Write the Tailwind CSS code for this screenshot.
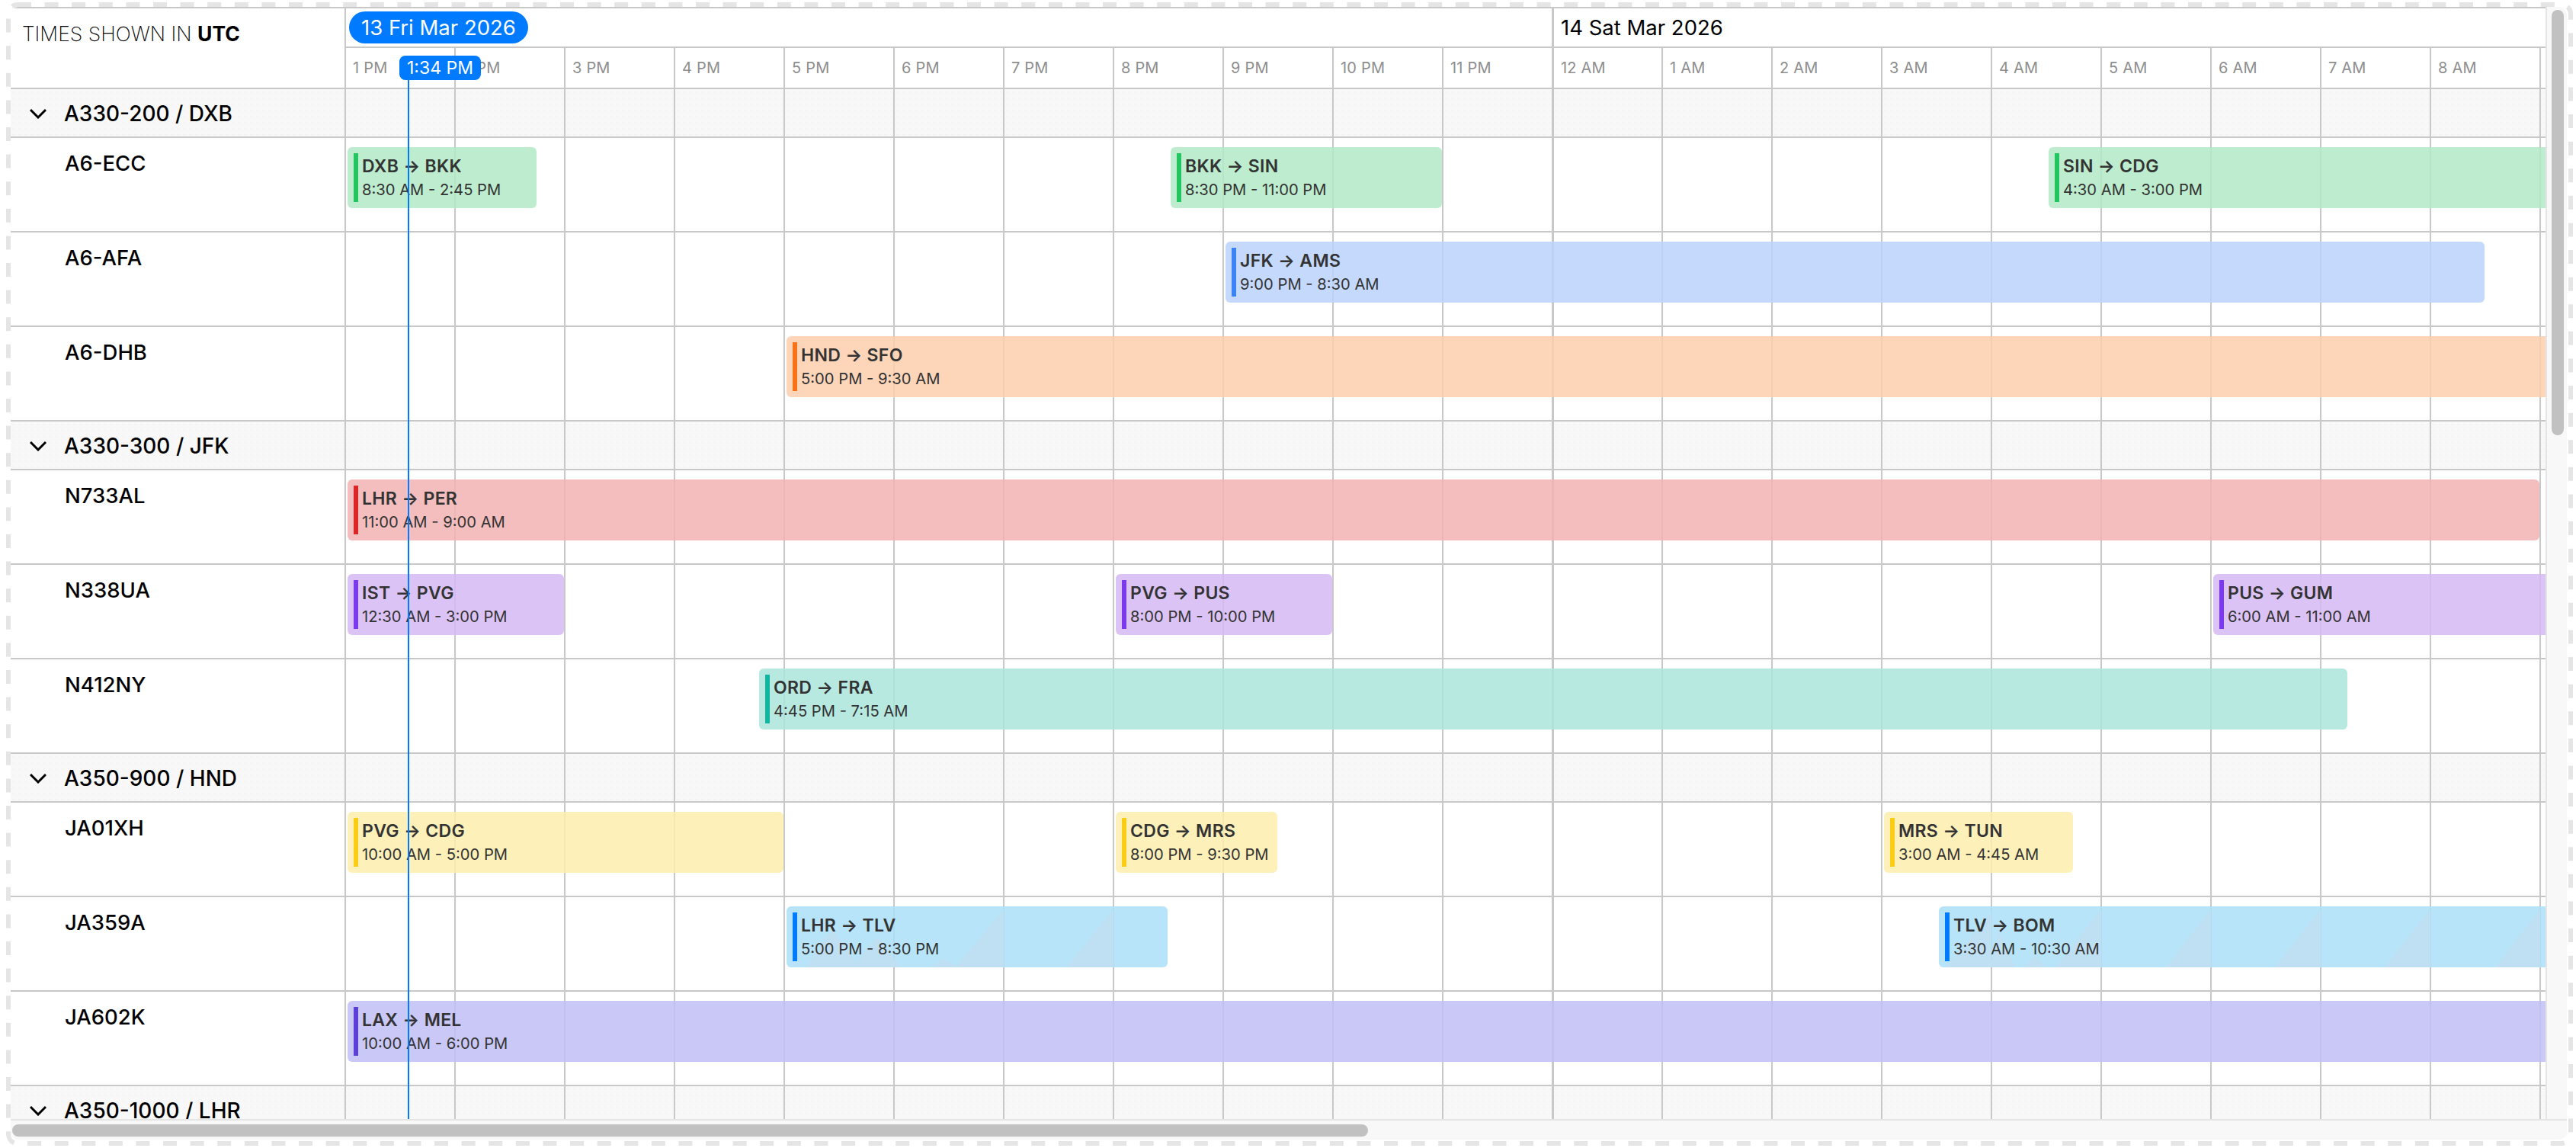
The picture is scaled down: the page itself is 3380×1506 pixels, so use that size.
<!DOCTYPE html>
<html lang="en">
<head>
<meta charset="utf-8">
<title>Fleet timeline</title>
<script src="https://cdn.jsdelivr.net/npm/@tailwindcss/browser@4"></script>
</head>
<body class="bg-white">
<div class="relative w-[3380px] h-[1506px] overflow-hidden bg-white font-['Inter','Liberation_Sans',sans-serif] text-black pt-[9px] pl-[14px]">

  <!-- dashed frame -->
  <svg class="absolute left-0 top-0 w-[3380px] h-[1506px] pointer-events-none" viewBox="0 0 3380 1506" fill="none">
    <rect x="11" y="6" width="3362" height="1494" rx="12" stroke="#e5e5e5" stroke-width="6" stroke-dasharray="18 17.6"/>
  </svg>

  <div class="relative w-[3354px] h-[1486px] flex flex-col rounded-[10px] overflow-hidden bg-[#f8f8f8]">
    <div class="flex h-[1459px]">

      <!-- viewport -->
      <div class="relative w-[3326px] h-[1459px] overflow-hidden bg-white border-t-2 border-[#c8c8c8]">

        <!-- header -->
        <div class="flex h-[106px] border-b-2 border-[#c8c8c8]">
          <div class="w-[440px] shrink-0 border-r-2 border-[#c8c8c8] pl-[15px] pt-[15px] text-[26.5px] leading-[36px] font-extralight">TIMES SHOWN IN <span class="font-bold">UTC</span></div>
          <div class="flex flex-col flex-1 min-w-0">
            <div class="flex h-[52px] border-b-2 border-[#c8c8c8]">
              <div class="w-[1585px] shrink-0 border-r-[3px] border-[#c8c8c8] pl-[4px] pt-[4px]">
                <div class="w-[235px] h-[42px] rounded-full bg-[#007aff] text-white text-[27.5px] leading-[42px] pl-[16px] whitespace-nowrap">13 Fri Mar 2026</div>
              </div>
              <div class="pl-[9px] pt-[4px] text-[27.5px] leading-[42px] whitespace-nowrap">14 Sat Mar 2026</div>
            </div>
            <div class="flex h-[52px] text-[20px] leading-[52px] tracking-[0.2px] text-[#8e8e8e] whitespace-nowrap">
              <div class="w-[144px] shrink-0 border-r-2 border-[#c8c8c8] pl-[9px]">1 PM</div>
              <div class="w-[144px] shrink-0 border-r-2 border-[#c8c8c8] pl-[9px]">2 PM</div>
              <div class="w-[144px] shrink-0 border-r-2 border-[#c8c8c8] pl-[9px]">3 PM</div>
              <div class="w-[144px] shrink-0 border-r-2 border-[#c8c8c8] pl-[9px]">4 PM</div>
              <div class="w-[144px] shrink-0 border-r-2 border-[#c8c8c8] pl-[9px]">5 PM</div>
              <div class="w-[144px] shrink-0 border-r-2 border-[#c8c8c8] pl-[9px]">6 PM</div>
              <div class="w-[144px] shrink-0 border-r-2 border-[#c8c8c8] pl-[9px]">7 PM</div>
              <div class="w-[144px] shrink-0 border-r-2 border-[#c8c8c8] pl-[9px]">8 PM</div>
              <div class="w-[144px] shrink-0 border-r-2 border-[#c8c8c8] pl-[9px]">9 PM</div>
              <div class="w-[144px] shrink-0 border-r-2 border-[#c8c8c8] pl-[9px]">10 PM</div>
              <div class="w-[145px] shrink-0 border-r-[3px] border-[#c8c8c8] pl-[9px]">11 PM</div>
              <div class="w-[143px] shrink-0 border-r-2 border-[#c8c8c8] pl-[9px]">12 AM</div>
              <div class="w-[144px] shrink-0 border-r-2 border-[#c8c8c8] pl-[9px]">1 AM</div>
              <div class="w-[144px] shrink-0 border-r-2 border-[#c8c8c8] pl-[9px]">2 AM</div>
              <div class="w-[144px] shrink-0 border-r-2 border-[#c8c8c8] pl-[9px]">3 AM</div>
              <div class="w-[144px] shrink-0 border-r-2 border-[#c8c8c8] pl-[9px]">4 AM</div>
              <div class="w-[144px] shrink-0 border-r-2 border-[#c8c8c8] pl-[9px]">5 AM</div>
              <div class="w-[144px] shrink-0 border-r-2 border-[#c8c8c8] pl-[9px]">6 AM</div>
              <div class="w-[144px] shrink-0 border-r-2 border-[#c8c8c8] pl-[9px]">7 AM</div>
              <div class="w-[144px] shrink-0 border-r-2 border-[#c8c8c8] pl-[9px]">8 AM</div>
            </div>
          </div>
        </div>

        <!-- body -->
        <div class="relative">

          <!-- group A330-200 -->
          <div class="flex h-[64px] border-b-2 border-[#c8c8c8] bg-[#f8f8f8] bg-[radial-gradient(#f3f3f3_0.8px,transparent_0.8px)] bg-size-[8px_8px]">
            <div class="w-[440px] shrink-0 flex items-center pl-[25px] pt-[2px] gap-[23px] border-r-2 border-[#c8c8c8] text-[28px] font-medium">
              <svg class="w-[22px] h-[13px] shrink-0" viewBox="0 0 22 13" fill="none" stroke="#000" stroke-width="3"><path d="M1 1l10 10L21 1"/></svg>
              <span>A330-200 / DXB</span>
            </div>
          </div>
          <!-- A6-ECC -->
          <div class="flex h-[124px] border-b-2 border-[#c8c8c8]">
            <div class="w-[440px] shrink-0 border-r-2 border-[#c8c8c8] pl-[71px] pt-[17px] text-[27.5px] leading-[32px] font-medium">A6-ECC</div>
            <div class="relative flex-1 min-w-0">
              <div class="absolute z-20 top-[12px] left-[2px] w-[248px] h-[80px] rounded-[6px] bg-[#b2e9c6]/85 flex p-[8px] gap-[5px]"><i class="block w-[6px] h-[64px] bg-[#22c55e]"></i><div class="whitespace-nowrap text-[#333333]"><div class="mt-[4px] text-[23px] leading-[26px] font-semibold tracking-[0.3px]">DXB → BKK</div><div class="mt-[6px] text-[20.2px] leading-[24px]">8:30 AM - 2:45 PM</div></div></div>
              <div class="absolute z-20 top-[12px] left-[1082px] w-[356px] h-[80px] rounded-[6px] bg-[#b2e9c6]/85 flex p-[8px] gap-[5px]"><i class="block w-[6px] h-[64px] bg-[#22c55e]"></i><div class="whitespace-nowrap text-[#333333]"><div class="mt-[4px] text-[23px] leading-[26px] font-semibold tracking-[0.3px]">BKK → SIN</div><div class="mt-[6px] text-[20.2px] leading-[24px]">8:30 PM - 11:00 PM</div></div></div>
              <div class="absolute z-20 top-[12px] left-[2234px] w-[700px] h-[80px] rounded-[6px] bg-[#b2e9c6]/85 flex p-[8px] gap-[5px]"><i class="block w-[6px] h-[64px] bg-[#22c55e]"></i><div class="whitespace-nowrap text-[#333333]"><div class="mt-[4px] text-[23px] leading-[26px] font-semibold tracking-[0.3px]">SIN → CDG</div><div class="mt-[6px] text-[20.2px] leading-[24px]">4:30 AM - 3:00 PM</div></div></div>
            </div>
          </div>
          <!-- A6-AFA -->
          <div class="flex h-[124px] border-b-2 border-[#c8c8c8]">
            <div class="w-[440px] shrink-0 border-r-2 border-[#c8c8c8] pl-[71px] pt-[17px] text-[27.5px] leading-[32px] font-medium">A6-AFA</div>
            <div class="relative flex-1 min-w-0">
              <div class="absolute z-20 top-[12px] left-[1154px] w-[1652px] h-[80px] rounded-[6px] bg-[#bad2fb]/85 flex p-[8px] gap-[5px]"><i class="block w-[6px] h-[64px] bg-[#3b82f6]"></i><div class="whitespace-nowrap text-[#333333]"><div class="mt-[4px] text-[23px] leading-[26px] font-semibold tracking-[0.3px]">JFK → AMS</div><div class="mt-[6px] text-[20.2px] leading-[24px]">9:00 PM - 8:30 AM</div></div></div>
            </div>
          </div>
          <!-- A6-DHB -->
          <div class="flex h-[124px] border-b-2 border-[#c8c8c8]">
            <div class="w-[440px] shrink-0 border-r-2 border-[#c8c8c8] pl-[71px] pt-[17px] text-[27.5px] leading-[32px] font-medium">A6-DHB</div>
            <div class="relative flex-1 min-w-0">
              <div class="absolute z-20 top-[12px] left-[578px] w-[2400px] h-[80px] rounded-[6px] bg-[#fdcead]/85 flex p-[8px] gap-[5px]"><i class="block w-[6px] h-[64px] bg-[#f97316]"></i><div class="whitespace-nowrap text-[#333333]"><div class="mt-[4px] text-[23px] leading-[26px] font-semibold tracking-[0.3px]">HND → SFO</div><div class="mt-[6px] text-[20.2px] leading-[24px]">5:00 PM - 9:30 AM</div></div></div>
            </div>
          </div>

          <!-- group A330-300 -->
          <div class="flex h-[64px] border-b-2 border-[#c8c8c8] bg-[#f8f8f8] bg-[radial-gradient(#f3f3f3_0.8px,transparent_0.8px)] bg-size-[8px_8px]">
            <div class="w-[440px] shrink-0 flex items-center pl-[25px] pt-[2px] gap-[23px] border-r-2 border-[#c8c8c8] text-[28px] font-medium">
              <svg class="w-[22px] h-[13px] shrink-0" viewBox="0 0 22 13" fill="none" stroke="#000" stroke-width="3"><path d="M1 1l10 10L21 1"/></svg>
              <span>A330-300 / JFK</span>
            </div>
          </div>
          <!-- N733AL -->
          <div class="flex h-[124px] border-b-2 border-[#c8c8c8]">
            <div class="w-[440px] shrink-0 border-r-2 border-[#c8c8c8] pl-[71px] pt-[17px] text-[27.5px] leading-[32px] font-medium">N733AL</div>
            <div class="relative flex-1 min-w-0">
              <div class="absolute z-20 top-[12px] left-[2px] w-[2876px] h-[80px] rounded-[6px] bg-[#f2b3b3]/85 flex p-[8px] gap-[5px]"><i class="block w-[6px] h-[64px] bg-[#dc2626]"></i><div class="whitespace-nowrap text-[#333333]"><div class="mt-[4px] text-[23px] leading-[26px] font-semibold tracking-[0.3px]">LHR → PER</div><div class="mt-[6px] text-[20.2px] leading-[24px]">11:00 AM - 9:00 AM</div></div></div>
            </div>
          </div>
          <!-- N338UA -->
          <div class="flex h-[124px] border-b-2 border-[#c8c8c8]">
            <div class="w-[440px] shrink-0 border-r-2 border-[#c8c8c8] pl-[71px] pt-[17px] text-[27.5px] leading-[32px] font-medium">N338UA</div>
            <div class="relative flex-1 min-w-0">
              <div class="absolute z-20 top-[12px] left-[2px] w-[284px] h-[80px] rounded-[6px] bg-[#d6b8f4]/85 flex p-[8px] gap-[5px]"><i class="block w-[6px] h-[64px] bg-[#7c3aed]"></i><div class="whitespace-nowrap text-[#333333]"><div class="mt-[4px] text-[23px] leading-[26px] font-semibold tracking-[0.3px]">IST → PVG</div><div class="mt-[6px] text-[20.2px] leading-[24px]">12:30 AM - 3:00 PM</div></div></div>
              <div class="absolute z-20 top-[12px] left-[1010px] w-[284px] h-[80px] rounded-[6px] bg-[#d6b8f4]/85 flex p-[8px] gap-[5px]"><i class="block w-[6px] h-[64px] bg-[#7c3aed]"></i><div class="whitespace-nowrap text-[#333333]"><div class="mt-[4px] text-[23px] leading-[26px] font-semibold tracking-[0.3px]">PVG → PUS</div><div class="mt-[6px] text-[20.2px] leading-[24px]">8:00 PM - 10:00 PM</div></div></div>
              <div class="absolute z-20 top-[12px] left-[2450px] w-[600px] h-[80px] rounded-[6px] bg-[#d6b8f4]/85 flex p-[8px] gap-[5px]"><i class="block w-[6px] h-[64px] bg-[#7c3aed]"></i><div class="whitespace-nowrap text-[#333333]"><div class="mt-[4px] text-[23px] leading-[26px] font-semibold tracking-[0.3px]">PUS → GUM</div><div class="mt-[6px] text-[20.2px] leading-[24px]">6:00 AM - 11:00 AM</div></div></div>
            </div>
          </div>
          <!-- N412NY -->
          <div class="flex h-[124px] border-b-2 border-[#c8c8c8]">
            <div class="w-[440px] shrink-0 border-r-2 border-[#c8c8c8] pl-[71px] pt-[17px] text-[27.5px] leading-[32px] font-medium">N412NY</div>
            <div class="relative flex-1 min-w-0">
              <div class="absolute z-20 top-[12px] left-[542px] w-[2084px] h-[80px] rounded-[6px] bg-[#aae5dc]/85 flex p-[8px] gap-[5px]"><i class="block w-[6px] h-[64px] bg-[#12b5a0]"></i><div class="whitespace-nowrap text-[#333333]"><div class="mt-[4px] text-[23px] leading-[26px] font-semibold tracking-[0.3px]">ORD → FRA</div><div class="mt-[6px] text-[20.2px] leading-[24px]">4:45 PM - 7:15 AM</div></div></div>
            </div>
          </div>

          <!-- group A350-900 -->
          <div class="flex h-[64px] border-b-2 border-[#c8c8c8] bg-[#f8f8f8] bg-[radial-gradient(#f3f3f3_0.8px,transparent_0.8px)] bg-size-[8px_8px]">
            <div class="w-[440px] shrink-0 flex items-center pl-[25px] pt-[2px] gap-[23px] border-r-2 border-[#c8c8c8] text-[28px] font-medium">
              <svg class="w-[22px] h-[13px] shrink-0" viewBox="0 0 22 13" fill="none" stroke="#000" stroke-width="3"><path d="M1 1l10 10L21 1"/></svg>
              <span>A350-900 / HND</span>
            </div>
          </div>
          <!-- JA01XH -->
          <div class="flex h-[124px] border-b-2 border-[#c8c8c8]">
            <div class="w-[440px] shrink-0 border-r-2 border-[#c8c8c8] pl-[71px] pt-[17px] text-[27.5px] leading-[32px] font-medium">JA01XH</div>
            <div class="relative flex-1 min-w-0">
              <div class="absolute z-20 top-[12px] left-[2px] w-[572px] h-[80px] rounded-[6px] bg-[#fdedad]/85 flex p-[8px] gap-[5px]"><i class="block w-[6px] h-[64px] bg-[#facc15]"></i><div class="whitespace-nowrap text-[#333333]"><div class="mt-[4px] text-[23px] leading-[26px] font-semibold tracking-[0.3px]">PVG → CDG</div><div class="mt-[6px] text-[20.2px] leading-[24px]">10:00 AM - 5:00 PM</div></div></div>
              <div class="absolute z-20 top-[12px] left-[1010px] w-[212px] h-[80px] rounded-[6px] bg-[#fdedad]/85 flex p-[8px] gap-[5px]"><i class="block w-[6px] h-[64px] bg-[#facc15]"></i><div class="whitespace-nowrap text-[#333333]"><div class="mt-[4px] text-[23px] leading-[26px] font-semibold tracking-[0.3px]">CDG → MRS</div><div class="mt-[6px] text-[20.2px] leading-[24px]">8:00 PM - 9:30 PM</div></div></div>
              <div class="absolute z-20 top-[12px] left-[2018px] w-[248px] h-[80px] rounded-[6px] bg-[#fdedad]/85 flex p-[8px] gap-[5px]"><i class="block w-[6px] h-[64px] bg-[#facc15]"></i><div class="whitespace-nowrap text-[#333333]"><div class="mt-[4px] text-[23px] leading-[26px] font-semibold tracking-[0.3px]">MRS → TUN</div><div class="mt-[6px] text-[20.2px] leading-[24px]">3:00 AM - 4:45 AM</div></div></div>
            </div>
          </div>
          <!-- JA359A -->
          <div class="flex h-[124px] border-b-2 border-[#c8c8c8]">
            <div class="w-[440px] shrink-0 border-r-2 border-[#c8c8c8] pl-[71px] pt-[17px] text-[27.5px] leading-[32px] font-medium">JA359A</div>
            <div class="relative flex-1 min-w-0">
              <div class="absolute z-20 top-[12px] left-[578px] w-[500px] h-[80px] rounded-[6px] bg-[#aadff7]/85 flex p-[8px] gap-[5px] overflow-hidden">
                <svg class="absolute left-0 top-0 w-[500px] h-[80px]" viewBox="0 0 500 80" fill="#bfdff2"><path d="M25 80L60 30l35 50zM85 80l35-40 30 40zM190 80l15-12 20 12zM222 80l63-76v76zM368 80l61-76v76z"/></svg>
                <i class="relative block w-[6px] h-[64px] bg-[#007aff]"></i><div class="relative whitespace-nowrap text-[#333333]"><div class="mt-[4px] text-[23px] leading-[26px] font-semibold tracking-[0.3px]">LHR → TLV</div><div class="mt-[6px] text-[20.2px] leading-[24px]">5:00 PM - 8:30 PM</div></div>
              </div>
              <div class="absolute z-20 top-[12px] left-[2090px] w-[900px] h-[80px] rounded-[6px] bg-[#aadff7]/85 flex p-[8px] gap-[5px] overflow-hidden">
                <svg class="absolute left-0 top-0 w-[900px] h-[80px]" viewBox="0 0 900 80" fill="#bfdff2"><path d="M9 80L69 8v72zM67 80l12-46 21 46zM113 80l13-16 13 16zM153 80L213 4v76zM298 80L357 4v76zM441 80L501 4v76zM585 80L645 4v76zM730 80L789 4v76z"/></svg>
                <i class="relative block w-[6px] h-[64px] bg-[#007aff]"></i><div class="relative whitespace-nowrap text-[#333333]"><div class="mt-[4px] text-[23px] leading-[26px] font-semibold tracking-[0.3px]">TLV → BOM</div><div class="mt-[6px] text-[20.2px] leading-[24px]">3:30 AM - 10:30 AM</div></div>
              </div>
            </div>
          </div>
          <!-- JA602K -->
          <div class="flex h-[124px] border-b-2 border-[#c8c8c8]">
            <div class="w-[440px] shrink-0 border-r-2 border-[#c8c8c8] pl-[71px] pt-[17px] text-[27.5px] leading-[32px] font-medium">JA602K</div>
            <div class="relative flex-1 min-w-0">
              <div class="absolute z-20 top-[12px] left-[2px] w-[3000px] h-[80px] rounded-[6px] bg-[#c1bef6]/85 flex p-[8px] gap-[5px]"><i class="block w-[6px] h-[64px] bg-[#5b3fd8]"></i><div class="whitespace-nowrap text-[#333333]"><div class="mt-[4px] text-[23px] leading-[26px] font-semibold tracking-[0.3px]">LAX → MEL</div><div class="mt-[6px] text-[20.2px] leading-[24px]">10:00 AM - 6:00 PM</div></div></div>
            </div>
          </div>

          <!-- group A350-1000 -->
          <div class="flex h-[64px] border-b-2 border-[#c8c8c8] bg-[#f8f8f8] bg-[radial-gradient(#f3f3f3_0.8px,transparent_0.8px)] bg-size-[8px_8px]">
            <div class="w-[440px] shrink-0 flex items-center pl-[25px] pt-[2px] gap-[23px] border-r-2 border-[#c8c8c8] text-[28px] font-medium">
              <svg class="w-[22px] h-[13px] shrink-0" viewBox="0 0 22 13" fill="none" stroke="#000" stroke-width="3"><path d="M1 1l10 10L21 1"/></svg>
              <span>A350-1000 / LHR</span>
            </div>
          </div>

          <!-- hour grid lines over the rows, under the flights -->
          <div class="absolute top-0 bottom-0 left-[440px] flex pointer-events-none z-10">
            <div class="w-[144px] shrink-0 border-r-2 border-[#c8c8c8]"></div>
            <div class="w-[144px] shrink-0 border-r-2 border-[#c8c8c8]"></div>
            <div class="w-[144px] shrink-0 border-r-2 border-[#c8c8c8]"></div>
            <div class="w-[144px] shrink-0 border-r-2 border-[#c8c8c8]"></div>
            <div class="w-[144px] shrink-0 border-r-2 border-[#c8c8c8]"></div>
            <div class="w-[144px] shrink-0 border-r-2 border-[#c8c8c8]"></div>
            <div class="w-[144px] shrink-0 border-r-2 border-[#c8c8c8]"></div>
            <div class="w-[144px] shrink-0 border-r-2 border-[#c8c8c8]"></div>
            <div class="w-[144px] shrink-0 border-r-2 border-[#c8c8c8]"></div>
            <div class="w-[144px] shrink-0 border-r-2 border-[#c8c8c8]"></div>
            <div class="w-[145px] shrink-0 border-r-[3px] border-[#c8c8c8]"></div>
            <div class="w-[143px] shrink-0 border-r-2 border-[#c8c8c8]"></div>
            <div class="w-[144px] shrink-0 border-r-2 border-[#c8c8c8]"></div>
            <div class="w-[144px] shrink-0 border-r-2 border-[#c8c8c8]"></div>
            <div class="w-[144px] shrink-0 border-r-2 border-[#c8c8c8]"></div>
            <div class="w-[144px] shrink-0 border-r-2 border-[#c8c8c8]"></div>
            <div class="w-[144px] shrink-0 border-r-2 border-[#c8c8c8]"></div>
            <div class="w-[144px] shrink-0 border-r-2 border-[#c8c8c8]"></div>
            <div class="w-[144px] shrink-0 border-r-2 border-[#c8c8c8]"></div>
            <div class="w-[144px] shrink-0 border-r-2 border-[#c8c8c8]"></div>
          </div>
        </div>

        <!-- now marker -->
        <div class="absolute z-30 left-[510px] top-[62px] w-[107px] h-[32px] rounded-[8px] bg-[#007aff] text-white text-[23px] leading-[32px] text-center whitespace-nowrap">1:34 PM</div>
        <div class="absolute z-30 left-[521px] top-[94px] bottom-0 w-[2px] bg-[#007aff]"></div>
      </div>

      <!-- vertical scrollbar -->
      <div class="w-[28px] shrink-0 border-l-2 border-[#e5e5e5] pl-[6px] pt-[4px]">
        <div class="w-[16px] h-[558px] rounded-full bg-[#c1c1c1]"></div>
      </div>
    </div>

    <!-- horizontal scrollbar -->
    <div class="h-[27px] border-t-2 border-[#e5e5e5] pl-[2px] pt-[5px]">
      <div class="w-[1779px] h-[16px] rounded-full bg-[#c1c1c1]"></div>
    </div>
  </div>
</div>
</body>
</html>
